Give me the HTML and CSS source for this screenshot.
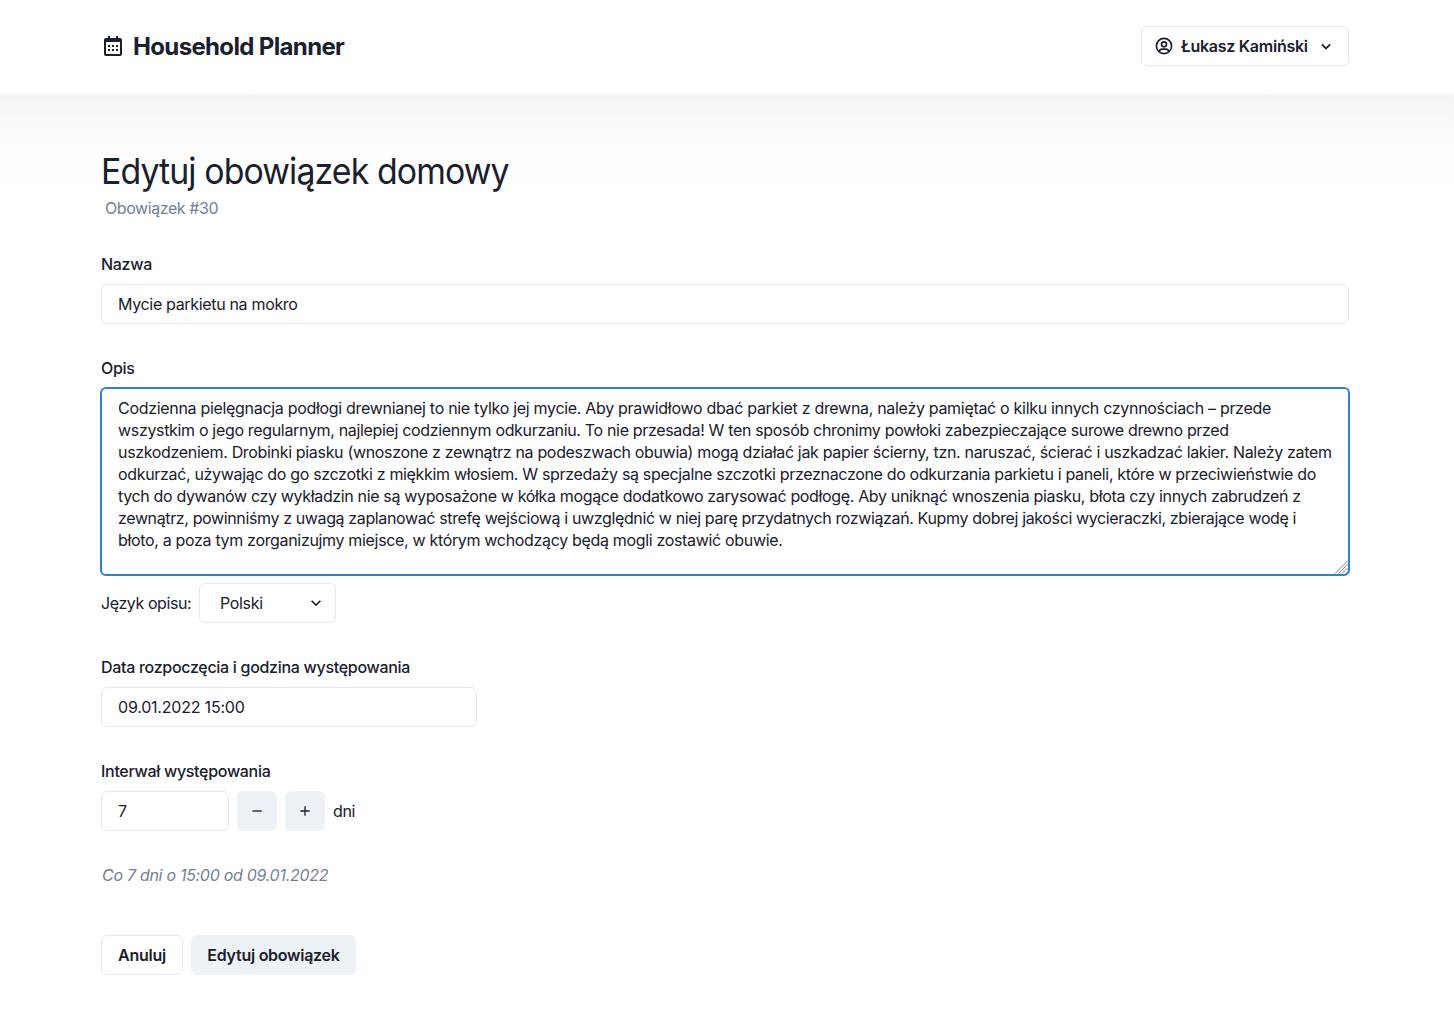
FILE: index.html
```html
<!DOCTYPE html>
<html lang="pl">
<head>
<meta charset="utf-8">
<title>Household Planner</title>
<link rel="stylesheet" href="styles.css">
</head>
<body>
<header class="header">
  <div class="brand">
    <svg class="icon-24" viewBox="0 0 24 24"><path d="M7 11h2v2H7zm0 4h2v2H7zm4-4h2v2h-2zm0 4h2v2h-2zm4-4h2v2h-2zm0 4h2v2h-2z"/><path d="M5 22h14c1.103 0 2-.897 2-2V6c0-1.103-.897-2-2-2h-2V2h-2v2H9V2H7v2H5c-1.103 0-2 .897-2 2v14c0 1.103.897 2 2 2zM19 8l.001 12H5V8h14z"/></svg>
    <span class="brand-name">Household Planner</span>
  </div>
  <button class="user-menu">
    <svg class="icon-20" viewBox="0 0 24 24" fill="none" stroke="currentColor" stroke-width="2"><circle cx="12" cy="12" r="9.1"/><circle cx="12" cy="10" r="3"/><path d="M6 18.700c.6-1.900 2-2.900 4-2.900h4c2 0 3.400 1 4 2.900"/></svg>
    <span class="user-name">Łukasz Kamiński</span>
    <svg class="icon-20" viewBox="0 0 24 24"><path d="M16.293 9.293 12 13.586 7.707 9.293l-1.414 1.414L12 16.414l5.707-5.707z"/></svg>
  </button>
</header>
<main class="page">
  <h1 class="title">Edytuj obowiązek domowy</h1>
  <p class="subtitle">Obowiązek #30</p>
  <form class="form">
    <div class="field">
      <label class="label" for="name">Nazwa</label>
      <input class="input" id="name" value="Mycie parkietu na mokro">
    </div>
    <div class="field">
      <label class="label">Opis</label>
      <div class="input description" role="textbox" aria-multiline="true">
        <div>Codzienna pielęgnacja podłogi drewnianej to nie tylko jej mycie. Aby prawidłowo dbać parkiet z drewna, należy pamiętać o kilku innych czynnościach – przede</div>
        <div>wszystkim o jego regularnym, najlepiej codziennym odkurzaniu. To nie przesada! W ten sposób chronimy powłoki zabezpieczające surowe drewno przed</div>
        <div>uszkodzeniem. Drobinki piasku (wnoszone z zewnątrz na podeszwach obuwia) mogą działać jak papier ścierny, tzn. naruszać, ścierać i uszkadzać lakier. Należy zatem</div>
        <div>odkurzać, używając do go szczotki z miękkim włosiem. W sprzedaży są specjalne szczotki przeznaczone do odkurzania parkietu i paneli, które w przeciwieństwie do</div>
        <div>tych do dywanów czy wykładzin nie są wyposażone w kółka mogące dodatkowo zarysować podłogę. Aby uniknąć wnoszenia piasku, błota czy innych zabrudzeń z</div>
        <div>zewnątrz, powinniśmy z uwagą zaplanować strefę wejściową i uwzględnić w niej parę przydatnych rozwiązań. Kupmy dobrej jakości wycieraczki, zbierające wodę i</div>
        <div>błoto, a poza tym zorganizujmy miejsce, w którym wchodzący będą mogli zostawić obuwie.</div>
        <svg class="grip" viewBox="0 0 14 14"><path d="M1 13.500 13.500 1M4.500 13.500l9-9M8 13.500 13.500 8M11.500 13.500l2-2"/></svg>
      </div>
      <div class="language">
        <span class="language-label">Język opisu:</span>
        <div class="select"><span>Polski</span><svg class="icon-20" viewBox="0 0 24 24"><path d="M16.590 8.590 12 13.170 7.410 8.590 6 10l6 6 6-6z"/></svg></div>
      </div>
    </div>
    <div class="field">
      <label class="label" for="start">Data rozpoczęcia i godzina występowania</label>
      <input class="input start" id="start" value="09.01.2022 15:00">
    </div>
    <div class="field">
      <label class="label" for="interval">Interwał występowania</label>
      <div class="stepper">
        <input class="input interval" id="interval" value="7">
        <button class="step" type="button"><svg class="icon-16" viewBox="0 0 24 24"><path d="M5 11h14v2H5z"/></svg></button>
        <button class="step" type="button"><svg class="icon-16" viewBox="0 0 24 24"><path d="M19 11h-6V5h-2v6H5v2h6v6h2v-6h6z"/></svg></button>
        <span>dni</span>
      </div>
    </div>
    <p class="summary">Co 7 dni o 15:00 od 09.01.2022</p>
    <div class="actions">
      <button class="button cancel" type="button">Anuluj</button>
      <button class="button submit" type="button">Edytuj obowiązek</button>
    </div>
  </form>
</main>
</body>
</html>
```
FILE: styles.css
```css
* { box-sizing: border-box; }
body {
  margin: 0;
  min-height: 1020px;
  background: #fff;
  color: #1a202c;
  font: 16px/24px Inter, "Liberation Sans", sans-serif;
  letter-spacing: -0.33px;
}
h1, p { margin: 0; font-weight: 400; }
button, input { font: inherit; color: inherit; letter-spacing: inherit; margin: 0; outline: none; }
svg { display: block; flex: none; fill: currentColor; }
svg[fill="none"] { fill: none; }
.icon-24 { width: 24px; height: 24px; }
.icon-20 { width: 20px; height: 20px; }
.icon-16 { width: 16px; height: 16px; }
.header {
  display: flex;
  align-items: center;
  justify-content: space-between;
  height: 94px;
  padding: 0 105px 2px 101px;
}
.brand { display: flex; align-items: center; gap: 8px; }
.brand-name { padding-top: 2px; font-size: 24px; line-height: 32px; font-weight: 700; letter-spacing: -0.65px; }
.user-menu {
  display: flex;
  align-items: center;
  width: 208px;
  height: 40px;
  padding: 0 12px;
  border: 1px solid #e2e8f0;
  border-radius: 6px;
  background: #fff;
  font-weight: 600;
}
.user-name { flex: 1; margin-left: 7px; text-align: left; white-space: nowrap; letter-spacing: -0.25px; }
.page {
  padding: 51px 105px 44px 101px;
  background: linear-gradient(#f2f4f7, #f6f7f9 16px, #f9fafb 32px, #fbfcfe 44px, #fdfdfd 60px, #fefefe 80px, #fff 100px) no-repeat;
}
.title {
  width: max-content;
  height: 51px;
  font-size: 36px;
  line-height: 52px;
  letter-spacing: -0.95px;
  transform: scaleX(0.94);
  transform-origin: left;
}
.subtitle { padding-left: 4px; color: #718096; letter-spacing: -0.42px; }
.form { display: flex; flex-direction: column; margin-top: 32px; }
.field { display: flex; flex-direction: column; margin-bottom: 32px; }
.label { margin-bottom: 8px; font-weight: 500; letter-spacing: -0.3px; }
.input {
  display: block;
  width: 100%;
  height: 40px;
  padding: 0 16px;
  border: 1px solid #e2e8f0;
  border-radius: 6px;
  background: #fff;
}
.description {
  position: relative;
  height: 189px;
  width: 1250px;
  margin: -1px -1px 7px;
  padding: 8px 0 8px 16px;
  border: 2px solid #3182ce;
  line-height: 22px;
  white-space: nowrap;
}
.description div:nth-child(1) { letter-spacing: -0.307px; }
.description div:nth-child(5) { letter-spacing: -0.347px; }
.description div:nth-child(6) { letter-spacing: -0.371px; }
.grip {
  position: absolute;
  right: 0;
  bottom: 0;
  width: 14px;
  height: 14px;
  fill: none;
  stroke: #777;
  stroke-width: 0.9;
}
.language { display: flex; align-items: center; gap: 8px; }
.language-label { width: 90px; white-space: nowrap; letter-spacing: -0.42px; }
.select {
  display: flex;
  align-items: center;
  justify-content: space-between;
  width: 137px;
  height: 40px;
  padding: 0 9px 0 20px;
  border: 1px solid #e2e8f0;
  border-radius: 6px;
  background: #fff;
}
.start { width: 376px; letter-spacing: -0.21px; }
.stepper { display: flex; align-items: center; gap: 8px; }
.interval { width: 128px; }
.step {
  display: flex;
  align-items: center;
  justify-content: center;
  width: 40px;
  height: 40px;
  padding: 0;
  border: 0;
  border-radius: 6px;
  background: #edf2f7;
}
.summary { padding-left: 1px; color: #718096; font-style: italic; letter-spacing: -0.29px; }
.actions { display: flex; gap: 8px; margin-top: 48px; }
.button { height: 40px; padding: 0; border: 0; border-radius: 6px; font-weight: 600; letter-spacing: -0.26px; }
.cancel { width: 82px; border: 1px solid #e2e8f0; background: #fff; }
.submit { width: 165px; background: #edf2f7; }
```
